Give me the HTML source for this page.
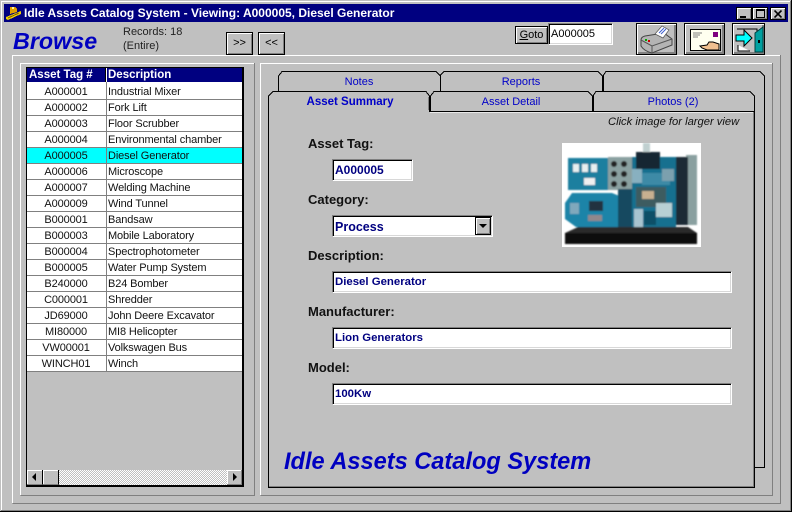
<!DOCTYPE html>
<html><head><meta charset="utf-8"><style>
html,body{margin:0;padding:0;background:#c0c0c0}
#w{position:relative;width:792px;height:512px;overflow:hidden;background:#c0c0c0;font:11px "Liberation Sans",sans-serif;color:#000}
.a{position:absolute;white-space:nowrap}
.l{position:absolute;box-sizing:border-box}
.btn{position:absolute;box-sizing:border-box;background:#c0c0c0;border:1px solid #000;box-shadow:inset 1px 1px 0 #fff,inset -1px -1px 0 #808080;text-align:center}
.in{position:absolute;box-sizing:border-box;background:#fff;border-top:1px solid #808080;border-left:1px solid #808080;border-right:1px solid #fff;border-bottom:1px solid #fff;box-shadow:inset 1px 1px 0 #000,inset -1px -1px 0 #d8d8d8;color:#000080;font-weight:bold;font-size:11.4px;line-height:20px;padding-left:2px}
.lab{position:absolute;font:bold 13px "Liberation Sans",sans-serif;color:#111;white-space:nowrap}
.tab{position:absolute;color:#0000c8;font-size:11px;text-align:center;white-space:nowrap}
.c1,.c2{position:absolute;height:15px;line-height:17px;font-size:11px;white-space:nowrap;color:#111;letter-spacing:-.12px}
.c1{left:27px;width:78px;text-align:center}.c2{left:108px}
.big{position:absolute;font:italic bold 23.6px "Liberation Sans",sans-serif;color:#0000c0;white-space:nowrap}
</style></head><body><div id="w">

<svg class="a" style="left:0;top:0" width="792" height="512" shape-rendering="crispEdges" fill="none">
<path d="M0.5 511V0.5H791" stroke="#c0c0c0"/><path d="M1.5 510V1.5H790" stroke="#fff"/>
<path d="M0 511.5H791.5V0" stroke="#000"/><path d="M1 510.5H790.5V1" stroke="#808080"/>
<path d="M12.5 503V55.5H780" stroke="#fff"/><path d="M12.5 503.5H780.5V55" stroke="#808080"/>
<path d="M20.5 495V63.5H254" stroke="#fff"/><path d="M20.5 495.5H254.5V63" stroke="#808080"/>
<path d="M260.5 495V63.5H772" stroke="#fff"/><path d="M260.5 495.5H772.5V63" stroke="#808080"/>
<path d="M278.5 91V76L282 71.5H436L440.5 76V91" stroke="#000"/>
<path d="M440.5 91V75L444 71.5H598L602.5 76V91" stroke="#000"/>
<path d="M603.5 91V75L606 71.5H760L764.5 76V467.5H755" stroke="#000"/>
<path d="M430.5 111.5V96L434 91.5H588L592.5 96V111" stroke="#000"/>
<path d="M593.5 111.5V95L596 91.5H750L754.5 96V487.5H268.5V96L273 91.5H426L429.5 96V112" stroke="#000"/>
<path d="M430 111.5H754" stroke="#000"/>
<path d="M269 486.5H754M753.5 112V487" stroke="#808080"/>
<path d="M428.5 97V110" stroke="#808080"/>
<path d="M430 112.5H753" stroke="#e8e8e8"/>
</svg>

<div class="l" style="left:4px;top:4px;width:784px;height:18px;background:#000080"></div>
<svg class="a" style="left:5px;top:4px" width="17" height="18" shape-rendering="crispEdges">
<path d="M1 13L16 7V10L3 16L1 15Z" fill="#f0d000"/><path d="M5 10V3H10L12 5V8Z" fill="#e0a000"/><path d="M3 14L14 9" stroke="#806000"/><path d="M7 3H9V5H7Z" fill="#fff0a0"/>
</svg>
<div class="a" style="left:24px;top:6px;color:#fff;font:bold 12px/14px 'Liberation Sans',sans-serif">Idle Assets Catalog System - Viewing: A000005, Diesel Generator</div>
<div class="btn" style="left:736px;top:7px;width:16px;height:13px"><div class="l" style="left:3px;top:8px;width:6px;height:2px;background:#000"></div></div>
<div class="btn" style="left:752px;top:7px;width:16px;height:13px"><div class="l" style="left:3px;top:1px;width:9px;height:9px;border:1px solid #000;border-top-width:2px"></div></div>
<div class="btn" style="left:770px;top:7px;width:16px;height:13px"><svg class="a" style="left:3px;top:2px" width="9" height="8"><path d="M0.5 0.5L7.5 7.5M7.5 0.5L0.5 7.5" stroke="#000" stroke-width="1.6"/></svg></div>

<div class="big" style="left:13px;top:28px;font-size:23.3px">Browse</div>
<div class="a" style="left:123px;top:25px;line-height:14px;color:#222">Records: 18<br>(Entire)</div>
<div class="btn" style="left:226px;top:32px;width:27px;height:23px;line-height:21px">&gt;&gt;</div>
<div class="btn" style="left:258px;top:32px;width:27px;height:23px;line-height:21px">&lt;&lt;</div>
<div class="btn" style="left:515px;top:26px;width:33px;height:18px;line-height:16px"><u>G</u>oto</div>
<div class="in" style="left:548px;top:23px;width:65px;height:22px;color:#000;font-weight:normal;font-size:11px;line-height:20px;padding-left:2px">A000005</div>

<div class="btn" style="left:636px;top:23px;width:41px;height:32px;box-shadow:inset 1px 1px 0 #fff,inset -2px -2px 0 #808080">
<svg class="a" style="left:3px;top:1px" width="35" height="29"><path d="M1 15Q1 12 5 11L24 8L32 14V20L12 28Q4 26 1 21Z" fill="#b4b4b4" stroke="#444"/><path d="M1 15L12 21L32 14" fill="none" stroke="#555"/><path d="M12 21V28" stroke="#555"/><path d="M15 9L22 1L29 5L23 13Z" fill="#fff" stroke="#555" stroke-width=".7"/><path d="M19 8L24 3M21 9L26 4" stroke="#4060d0"/><path d="M5 15h2" stroke="#0a0" stroke-width="2"/><path d="M8 16h2" stroke="#c00" stroke-width="2"/></svg></div>
<div class="btn" style="left:684px;top:23px;width:41px;height:32px;box-shadow:inset 1px 1px 0 #fff,inset -2px -2px 0 #808080">
<svg class="a" style="left:3px;top:3px" width="35" height="26" shape-rendering="crispEdges"><rect x="2.5" y="2.5" width="30" height="21" fill="#fffff0" stroke="#000"/><path d="M5 6h9M5 8h7M5 10h5" stroke="#808080"/><rect x="25" y="5" width="5" height="5" fill="#800080"/><path d="M12 19L19 18L21 15H25L31 17V23H19L14 21Z" fill="#f0c090" stroke="#000" shape-rendering="auto"/></svg></div>
<div class="btn" style="left:732px;top:23px;width:33px;height:32px;box-shadow:inset 1px 1px 0 #fff,inset -2px -2px 0 #808080">
<svg class="a" style="left:1px;top:1px" width="30" height="29"><path d="M3 4H23V27" fill="none" stroke="#000"/><path d="M4 20V26H16" fill="#fff" stroke="#000"/><path d="M21 8L29 2V27H21Z" fill="#00a0a0" stroke="#004040"/><path d="M25 15v3" stroke="#000" stroke-width="2"/><path d="M2 10H10V5L18 13L10 21V16H2Z" fill="#00ffff" stroke="#000"/></svg></div>

<div class="l" style="left:26px;top:67px;width:218px;height:420px;border:1px solid #000;border-width:1px 2px 2px 1px;background:#c0c0c0"></div>
<div class="l" style="left:27px;top:68px;width:215px;height:14px;background:#000080"></div>
<div class="l" style="left:27px;top:82px;width:215px;height:2px;background:#fff"></div>
<div class="l" style="left:27px;top:84px;width:215px;height:288px;background:repeating-linear-gradient(#fff 0 15px,#808080 15px 16px)"></div>
<div class="l" style="left:27px;top:148px;width:215px;height:15px;background:#00ffff"></div>
<div class="a" style="left:29px;top:68px;color:#fff;font:bold 11.5px/15px 'Liberation Sans',sans-serif">Asset Tag #</div>
<div class="a" style="left:108px;top:68px;color:#fff;font:bold 11.5px/15px 'Liberation Sans',sans-serif">Description</div>
<div class="l" style="left:106px;top:68px;width:1px;height:14px;background:#fff"></div>
<div class="l" style="left:105px;top:68px;width:1px;height:14px;background:#000"></div>
<div class="l" style="left:106px;top:82px;width:1px;height:290px;background:#808080"></div>

<div class="c1" style="top:84px">A000001</div><div class="c2" style="top:84px">Industrial Mixer</div>
<div class="c1" style="top:100px">A000002</div><div class="c2" style="top:100px">Fork Lift</div>
<div class="c1" style="top:116px">A000003</div><div class="c2" style="top:116px">Floor Scrubber</div>
<div class="c1" style="top:132px">A000004</div><div class="c2" style="top:132px">Environmental chamber</div>
<div class="c1" style="top:148px">A000005</div><div class="c2" style="top:148px">Diesel Generator</div>
<div class="c1" style="top:164px">A000006</div><div class="c2" style="top:164px">Microscope</div>
<div class="c1" style="top:180px">A000007</div><div class="c2" style="top:180px">Welding Machine</div>
<div class="c1" style="top:196px">A000009</div><div class="c2" style="top:196px">Wind Tunnel</div>
<div class="c1" style="top:212px">B000001</div><div class="c2" style="top:212px">Bandsaw</div>
<div class="c1" style="top:228px">B000003</div><div class="c2" style="top:228px">Mobile Laboratory</div>
<div class="c1" style="top:244px">B000004</div><div class="c2" style="top:244px">Spectrophotometer</div>
<div class="c1" style="top:260px">B000005</div><div class="c2" style="top:260px">Water Pump System</div>
<div class="c1" style="top:276px">B240000</div><div class="c2" style="top:276px">B24 Bomber</div>
<div class="c1" style="top:292px">C000001</div><div class="c2" style="top:292px">Shredder</div>
<div class="c1" style="top:308px">JD69000</div><div class="c2" style="top:308px">John Deere Excavator</div>
<div class="c1" style="top:324px">MI80000</div><div class="c2" style="top:324px">MI8 Helicopter</div>
<div class="c1" style="top:340px">VW00001</div><div class="c2" style="top:340px">Volkswagen Bus</div>
<div class="c1" style="top:356px">WINCH01</div><div class="c2" style="top:356px">Winch</div>

<div class="l" style="left:59px;top:470px;width:168px;height:15px;background:repeating-conic-gradient(#fff 0 25%,#c0c0c0 0 50%) 0 0/2px 2px"></div>
<div class="l" style="left:27px;top:470px;width:16px;height:15px;background:#c0c0c0;border-right:1px solid #000;border-bottom:1px solid #808080;box-shadow:inset 1px 1px 0 #fff"><div class="l" style="left:5px;top:3px;width:0;height:0;border:4px solid transparent;border-left:0;border-right:4px solid #000"></div></div>
<div class="l" style="left:43px;top:470px;width:16px;height:15px;background:#c0c0c0;border-right:1px solid #000;border-bottom:1px solid #808080;box-shadow:inset 1px 1px 0 #fff"></div>
<div class="l" style="left:227px;top:470px;width:15px;height:15px;background:#c0c0c0;border-right:1px solid #808080;border-bottom:1px solid #808080;box-shadow:inset 1px 1px 0 #fff"><div class="l" style="left:6px;top:3px;width:0;height:0;border:4px solid transparent;border-right:0;border-left:4px solid #000"></div></div>

<div class="tab" style="left:278px;top:76px;width:162px">Notes</div>
<div class="tab" style="left:440px;top:76px;width:162px">Reports</div>
<div class="tab" style="left:269px;top:96px;width:162px;font-weight:bold;font-size:11.5px">Asset Summary</div>
<div class="tab" style="left:430px;top:96px;width:162px">Asset Detail</div>
<div class="tab" style="left:592px;top:96px;width:162px">Photos (2)</div>
<div class="a" style="left:608px;top:116px;font-style:italic;font-size:11.2px;color:#111">Click image for larger view</div>

<div class="lab" style="left:308px;top:136px">Asset Tag:</div>
<div class="in" style="left:332px;top:159px;width:81px;height:22px;font-size:12px">A000005</div>
<div class="lab" style="left:308px;top:192px">Category:</div>
<div class="in" style="left:332px;top:215px;width:161px;height:22px;font-size:12.5px;line-height:22px">Process</div>
<div class="btn" style="left:475px;top:217px;width:16px;height:18px"><div class="l" style="left:3px;top:6px;width:0;height:0;border:4px solid transparent;border-bottom:0;border-top:4px solid #000"></div></div>
<div class="lab" style="left:308px;top:248px">Description:</div>
<div class="in" style="left:332px;top:271px;width:400px;height:22px">Diesel Generator</div>
<div class="lab" style="left:308px;top:304px">Manufacturer:</div>
<div class="in" style="left:332px;top:327px;width:400px;height:22px">Lion Generators</div>
<div class="lab" style="left:308px;top:360px">Model:</div>
<div class="in" style="left:332px;top:383px;width:400px;height:22px">100Kw</div>

<svg class="a" style="left:562px;top:143px" width="139" height="104">
<defs><filter id="b" x="-5%" y="-5%" width="110%" height="110%"><feGaussianBlur stdDeviation="0.7"/></filter></defs>
<rect width="139" height="104" fill="#fff"/>
<g filter="url(#b)">
<rect x="81" y="0" width="7" height="14" fill="#c0d0d0"/>
<path d="M3 90H135V101H3Z" fill="#0c0c0c"/>
<path d="M3 90L16 84H126L135 90Z" fill="#2c2c2c"/>
<rect x="124" y="12" width="11" height="70" fill="#8aa0a0"/><rect x="112" y="14" width="14" height="68" fill="#1c2c34"/>
<rect x="6" y="15" width="40" height="32" fill="#1f7f9f"/>
<rect x="11" y="21" width="6" height="8" fill="#e8f0f0"/><rect x="20" y="21" width="6" height="8" fill="#e8f0f0"/><rect x="29" y="21" width="6" height="8" fill="#e8f0f0"/><rect x="22" y="35" width="11" height="7" fill="#f0f0f0"/>
<rect x="46" y="14" width="24" height="33" fill="#8aa0a0"/>
<circle cx="52" cy="21" r="3" fill="#222"/><circle cx="62" cy="21" r="3" fill="#222"/><circle cx="52" cy="31" r="3" fill="#222"/><circle cx="62" cy="31" r="3" fill="#222"/><circle cx="52" cy="41" r="3" fill="#222"/><circle cx="62" cy="41" r="3" fill="#222"/>
<path d="M10 50H50L60 54V84H14L3 76V60Z" fill="#1c84a8"/>
<rect x="8" y="60" width="9" height="11" fill="#80a8bc"/><rect x="27" y="58" width="14" height="10" fill="#203040"/><rect x="26" y="72" width="14" height="6" fill="#90888c"/>
<rect x="56" y="46" width="16" height="38" fill="#184a60"/>
<rect x="70" y="14" width="44" height="70" fill="#16708f"/>
<rect x="74" y="9" width="24" height="17" fill="#182830"/>
<rect x="70" y="26" width="10" height="14" fill="#88b0c0"/>
<rect x="80" y="30" width="28" height="12" fill="#3d8aa6"/>
<rect x="74" y="44" width="30" height="20" fill="#3c5c60"/>
<rect x="80" y="48" width="12" height="8" fill="#c8b090"/>
<rect x="94" y="60" width="16" height="14" fill="#b8d0d4"/>
<rect x="72" y="66" width="9" height="18" fill="#a8c4d0"/>
<rect x="100" y="26" width="12" height="12" fill="#7ca0ae"/>
<rect x="82" y="68" width="12" height="14" fill="#105068"/>
</g>
</svg>

<div class="big" style="left:284px;top:449px">Idle Assets Catalog System</div>
</div></body></html>
